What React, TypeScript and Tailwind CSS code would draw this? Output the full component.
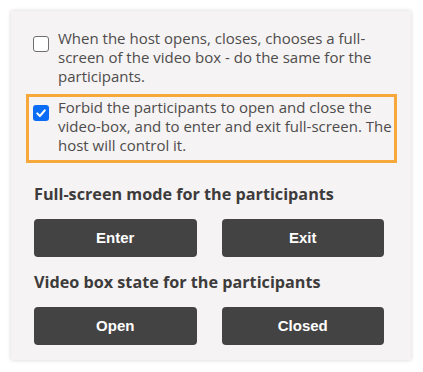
import React from "react";

function Box({ checked }: { checked: boolean }) {
  if (checked) {
    return (
      <span className="mt-[7px] flex h-4 w-4 shrink-0 items-center justify-center rounded-[3px] bg-[#0b6cf5]">
        <svg viewBox="0 0 16 16" className="h-[12px] w-[12px]" fill="none">
          <path d="M3 8.5 L6.5 12 L13 4.5" stroke="white" strokeWidth="2.8" strokeLinecap="round" strokeLinejoin="round" />
        </svg>
      </span>
    );
  }
  return <span className="mt-[7px] block h-4 w-4 shrink-0 rounded-[3px] border border-[#6f6f6f] bg-white" />;
}

function Row({ checked, text, highlight }: { checked: boolean; text: string; highlight?: boolean }) {
  return (
    <div
      className={
        "flex gap-[9px] border-[3px] pb-[5px] pl-[4px] pr-[0px] pt-[1px] " +
        (highlight ? "border-[#f7a83a]" : "border-transparent")
      }
    >
      <Box checked={checked} />
      <p className="text-[15px] leading-[19px] text-[#4e4c4c]">{text}</p>
    </div>
  );
}

function Btn({ label }: { label: string }) {
  return (
    <button className="h-[38px] flex-1 rounded-[4px] bg-[#444343] text-[15px] font-bold text-white [font-family:'Liberation_Sans',Arial,sans-serif]">
      {label}
    </button>
  );
}

export default function App() {
  return (
    <div className="h-[372px] w-[423px] bg-white pl-[11px] pt-[11px] [font-family:'Open_Sans',sans-serif]">
      <div className="h-[349px] w-[400px] bg-[#f5f3f3] pl-[15px] pr-[14px] pt-[14px] shadow-[0_0_4px_rgba(0,0,0,0.18)]">
        <Row checked={false} text="When the host opens, closes, chooses a full-screen of the video box - do the same for the participants." />
        <Row checked text="Forbid the participants to open and close the video-box, and to enter and exit full-screen. The host will control it." highlight />
        <div className="mt-[20px] pl-[8px] pr-[13px]">
          <h2 className="text-[16.2px] font-bold leading-[22px] text-[#3d3b3b]">Full-screen mode for the participants</h2>
          <div className="mt-[14px] flex gap-[25px]">
            <Btn label="Enter" />
            <Btn label="Exit" />
          </div>
          <h2 className="mt-[14px] text-[16.2px] font-bold leading-[22px] text-[#3d3b3b]">Video box state for the participants</h2>
          <div className="mt-[14px] flex gap-[25px]">
            <Btn label="Open" />
            <Btn label="Closed" />
          </div>
        </div>
      </div>
    </div>
  );
}
